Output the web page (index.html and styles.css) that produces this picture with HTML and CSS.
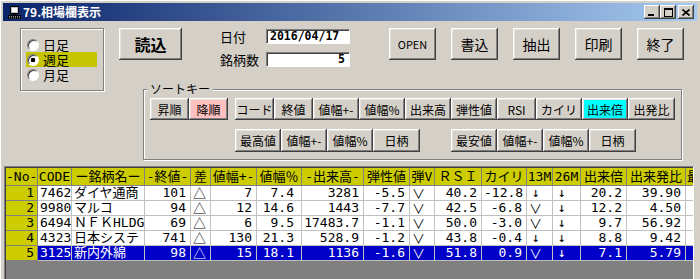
FILE: index.html
```html
<!DOCTYPE html>
<html lang="ja">
<head>
    <meta charset="UTF-8">
    <title>79.相場欄表示</title>
    <link rel="stylesheet" href="styles.css">
</head>
<body>
<div class="window">
    <div class="titlebar">
        <svg class="app-icon" viewBox="0 0 13 13">
            <rect x="2.5" y="0.5" width="8" height="7" fill="#c0c0c0" stroke="#000"/>
            <rect x="4" y="2" width="5" height="4" fill="#fff"/>
            <rect x="5" y="7.5" width="3" height="2" fill="#000"/>
            <rect x="0" y="9" width="13" height="4" fill="#000"/>
            <path d="M1 10.5h11M1 12h11" stroke="#c0c0c0" stroke-width="0.8" stroke-dasharray="1 1"/>
        </svg>
        <span class="title">79.相場欄表示</span>
        <div class="caption-btns">
            <span class="cap-btn"><svg width="8" height="7" viewBox="0 0 8 7"><rect x="0" y="5" width="6" height="2" fill="#000"/></svg></span>
            <span class="cap-btn"><svg width="9" height="9" viewBox="0 0 9 9"><rect x="0.5" y="0.5" width="8" height="8" fill="none" stroke="#000"/><rect x="0" y="0" width="9" height="2" fill="#000"/></svg></span>
            <span class="cap-btn close"><svg width="8" height="7" viewBox="0 0 8 7"><path d="M0.5 0.5L7.5 6.5M7.5 0.5L0.5 6.5" stroke="#000" stroke-width="1.6"/></svg></span>
        </div>
    </div>

    <div class="client">
        <div class="upper">
            <div class="period-box">
                <label class="period"><span class="radio"></span>日足</label>
                <label class="period active"><span class="radio checked"></span>週足</label>
                <label class="period"><span class="radio"></span>月足</label>
            </div>

            <div class="upper-right">
                <div class="toolbar">
                    <button class="btn btn-load">読込</button>
                    <div class="info">
                        <span class="info-label">日付</span>
                        <span class="field">2016/04/17</span>
                        <span class="info-label">銘柄数</span>
                        <span class="field num">5</span>
                    </div>
                    <div class="cmds">
                        <button class="btn btn-cmd latin">OPEN</button>
                        <button class="btn btn-cmd">書込</button>
                        <button class="btn btn-cmd">抽出</button>
                        <button class="btn btn-cmd">印刷</button>
                        <button class="btn btn-cmd">終了</button>
                    </div>
                </div>

                <div class="sort-box">
                    <div class="sort-caption">ソートキー</div>
                    <div class="sort-row">
                        <button class="btn sk w39">昇順</button>
                        <button class="btn sk w39 desc">降順</button>
                        <button class="btn sk w39 gap">コード</button>
                        <button class="btn sk w39">終値</button>
                        <button class="btn sk w46">値幅+-</button>
                        <button class="btn sk w46">値幅%</button>
                        <button class="btn sk w46">出来高</button>
                        <button class="btn sk w46">弾性値</button>
                        <button class="btn sk w39">RSI</button>
                        <button class="btn sk w46">カイリ</button>
                        <button class="btn sk w46 current">出来倍</button>
                        <button class="btn sk w47">出発比</button>
                    </div>
                    <div class="sort-row second">
                        <button class="btn sk w46">最高値</button>
                        <button class="btn sk w46">値幅+-</button>
                        <button class="btn sk w46">値幅%</button>
                        <button class="btn sk w47">日柄</button>
                        <button class="btn sk w46 block">最安値</button>
                        <button class="btn sk w46">値幅+-</button>
                        <button class="btn sk w46">値幅%</button>
                        <button class="btn sk w47">日柄</button>
                    </div>
                </div>
            </div>
        </div>

        <div class="grid">
            <div class="sheet">
                <div class="row head">
                    <span class="c">-No-</span><span class="c">CODE</span><span class="c">ー銘柄名ー</span><span class="c">-終値-</span><span class="c">差</span><span class="c">値幅+-</span><span class="c">値幅％</span><span class="c">-出来高-</span><span class="c">弾性値</span><span class="c">弾V</span><span class="c">ＲＳＩ</span><span class="c">カイリ</span><span class="c">13M</span><span class="c">26M</span><span class="c">出来倍</span><span class="c">出来発比</span><span class="c l">最高値</span>
                </div>
                <div class="row">
                    <span class="c no">1</span><span class="c">7462</span><span class="c">ダイヤ通商</span><span class="c r">101</span><span class="c s">△</span><span class="c r">7</span><span class="c r pct">7.4</span><span class="c r">3281</span><span class="c r">-5.5</span><span class="c s">∨</span><span class="c r">40.2</span><span class="c r">-12.8</span><span class="c a">↓</span><span class="c a">↓</span><span class="c r">20.2</span><span class="c r">39.90</span><span class="c"></span>
                </div>
                <div class="row">
                    <span class="c no">2</span><span class="c">9980</span><span class="c">マルコ</span><span class="c r">94</span><span class="c s">△</span><span class="c r">12</span><span class="c r pct">14.6</span><span class="c r">1443</span><span class="c r">-7.7</span><span class="c s">∨</span><span class="c r">42.5</span><span class="c r">-6.8</span><span class="c s">∨</span><span class="c a">↓</span><span class="c r">12.2</span><span class="c r">4.50</span><span class="c"></span>
                </div>
                <div class="row">
                    <span class="c no">3</span><span class="c">6494</span><span class="c">ＮＦＫHLDG</span><span class="c r">69</span><span class="c s">△</span><span class="c r">6</span><span class="c r pct">9.5</span><span class="c r">17483.7</span><span class="c r">-1.1</span><span class="c s">∨</span><span class="c r">50.0</span><span class="c r">-3.0</span><span class="c s">∨</span><span class="c a">↓</span><span class="c r">9.7</span><span class="c r">56.92</span><span class="c"></span>
                </div>
                <div class="row">
                    <span class="c no">4</span><span class="c">4323</span><span class="c">日本システ</span><span class="c r">741</span><span class="c s">△</span><span class="c r">130</span><span class="c r pct">21.3</span><span class="c r">528.9</span><span class="c r">-1.2</span><span class="c s">∨</span><span class="c r">43.8</span><span class="c r">-0.4</span><span class="c a">↓</span><span class="c a">↓</span><span class="c r">8.8</span><span class="c r">9.42</span><span class="c"></span>
                </div>
                <div class="row sel">
                    <span class="c no">5</span><span class="c">3125</span><span class="c">新内外綿</span><span class="c r">98</span><span class="c s">△</span><span class="c r">15</span><span class="c r pct">18.1</span><span class="c r">1136</span><span class="c r">-1.6</span><span class="c s">∨</span><span class="c r">51.8</span><span class="c r">0.9</span><span class="c s">∨</span><span class="c a">↓</span><span class="c r">7.1</span><span class="c r">5.79</span><span class="c"></span>
                </div>
            </div>
        </div>
    </div>
</div>
</body>
</html>
```

FILE: styles.css
```css
* {
    box-sizing: border-box;
}

body {
    margin: 0;
    font-family: "Noto Sans CJK JP", sans-serif;
    font-size: 12px;
    color: #000;
    background: #d4d0c8;
}

.window {
    width: 700px;
    height: 279px;
    padding: 3px 3px 0 3px;
    background: #d4d0c8;
    overflow: hidden;
    box-shadow: inset 1px 1px #ffffff;
}

/* title bar */
.titlebar {
    height: 18px;
    display: flex;
    align-items: center;
    padding: 0 3px 0 5px;
    background: linear-gradient(to right, #0a246a, #a6caf0);
}
.app-icon { width: 13px; height: 13px; margin-right: 2px; }
.title { color: #fff; font-weight: bold; font-size: 12px; line-height: 18px; }
.caption-btns { margin-left: auto; display: flex; }
.cap-btn {
    width: 16px;
    height: 14px;
    display: flex;
    align-items: center;
    justify-content: center;
    background: #d4d0c8;
    box-shadow: inset -1px -1px #404040, inset 1px 1px #fff, inset -2px -2px #808080;
}
.cap-btn.close { margin-left: 2px; }

/* shared button look */
.btn {
    font-family: inherit;
    color: #000;
    background: #d4d0c8;
    border: 0;
    padding: 0;
    box-shadow: inset -1px -1px #404040, inset 1px 1px #fff, inset -2px -2px #808080, inset 2px 2px #e4e2dc;
}

/* upper area */
.upper {
    display: flex;
    align-items: flex-start;
}

.period-box {
    width: 84px;
    height: 63px;
    margin: 7px 0 0 17px;
    padding: 8px 0 0 5px;
    border: 1px solid #808080;
    box-shadow: inset 1px 1px #fff, 1px 1px #fff;
}
.period {
    width: 71px;
    height: 15px;
    display: flex;
    align-items: center;
    padding-left: 1px;
    font-size: 13px;
    line-height: 15px;
}
.period.active { background: #c4c400; }
.radio {
    width: 12px;
    height: 12px;
    margin-right: 4px;
    border-radius: 50%;
    background: #fff;
    border: 1px solid;
    border-color: #808080 #fff #fff #808080;
    box-shadow: inset 1px 1px #404040;
}
.radio.checked { background: radial-gradient(circle, #000 0 2px, #fff 2.6px); }

.upper-right { display: flex; flex-direction: column; }

.toolbar {
    display: flex;
    align-items: flex-start;
    margin-top: 7px;
    padding-left: 15px;
}
.btn-load { width: 63px; height: 32px; font-size: 16px; font-weight: bold; }

.info {
    display: grid;
    grid-template-columns: 47px 84px;
    grid-auto-rows: 15px;
    row-gap: 8px;
    margin: 1px 0 0 37px;
}
.info-label { font-size: 13px; line-height: 15px; padding-left: 1px; }
.field {
    background: #fff;
    border: 1px solid;
    border-color: #808080 #fff #fff #808080;
    box-shadow: inset 1px 1px #404040;
    padding: 0 2px 0 3px;
    font: bold 11.5px "DejaVu Sans Mono", monospace;
    line-height: 13px;
}
.field.num { text-align: right; padding-right: 4px; }

.cmds { display: flex; gap: 15px; margin-left: 39px; }
.btn-cmd { width: 47px; height: 32px; font-size: 14px; }
.btn-cmd.latin { font-size: 11px; }

/* sort key group */
.sort-box {
    width: 539px;
    margin: 22px 0 0 39px;
    padding: 0 0 7px 6px;
    border: 1px solid #808080;
    box-shadow: inset 1px 1px #fff, 1px 1px #fff;
}
.sort-caption {
    width: fit-content;
    margin: -8px 0 0 -3px;
    padding: 0 3px;
    line-height: 14px;
    background: #d4d0c8;
}
.sort-row { display: flex; height: 22px; margin-top: 2px; }
.sort-row.second { height: 23px; margin: 9px 0 0 85px; }
.sk { font-size: 12px; }
.sk.w39 { width: 39px; }
.sk.w46 { width: 46px; }
.sk.w47 { width: 47px; }
.sk.gap { margin-left: 7px; }
.sk.block { margin-left: 31px; }
.sk.desc { background: #ffc0c0; }
.sk.current { background: #00ffff; }

/* stock grid */
.grid {
    width: 690px;
    height: 125px;
    margin: 6px 0 0 1px;
    padding: 1px 0 0 1px;
    border: 1px solid;
    border-color: #808080 #fff #fff #808080;
    box-shadow: inset 1px 1px #404040;
    background: #808080;
    overflow: hidden;
}
.sheet {
    display: grid;
    grid-template-columns: 32px 34px 73px 46px 20px 46px 45px 62px 46px 25px 47px 45px 26px 28px 46px 59px 46px;
    grid-template-rows: 18px repeat(5, 15px);
    width: max-content;
    font-family: "DejaVu Sans Mono", "Noto Sans CJK JP", monospace;
    font-size: 13px;
}
.row { display: contents; }
.c {
    background: #fff;
    border-right: 1px solid #c0c0c0;
    border-bottom: 1px solid #c0c0c0;
    padding: 0 2px;
    line-height: 14px;
    white-space: nowrap;
    overflow: hidden;
}
.head .c {
    background: #cccc00;
    border-color: #808080;
    line-height: 17px;
    text-align: center;
    padding: 0;
}
.head .c.l { text-align: left; padding-left: 1px; }
.c.no {
    background: #cccc00;
    border-color: #808080;
    text-align: right;
    padding-right: 3px;
}
.c.r { text-align: right; padding-right: 4px; }
.c.pct { padding-right: 7px; }
.c.s { font-family: "Noto Sans CJK JP", sans-serif; }
.c.a { padding-left: 5px; }
.row.sel .c:not(.no) { background: #0000c8; color: #fff; }
```
